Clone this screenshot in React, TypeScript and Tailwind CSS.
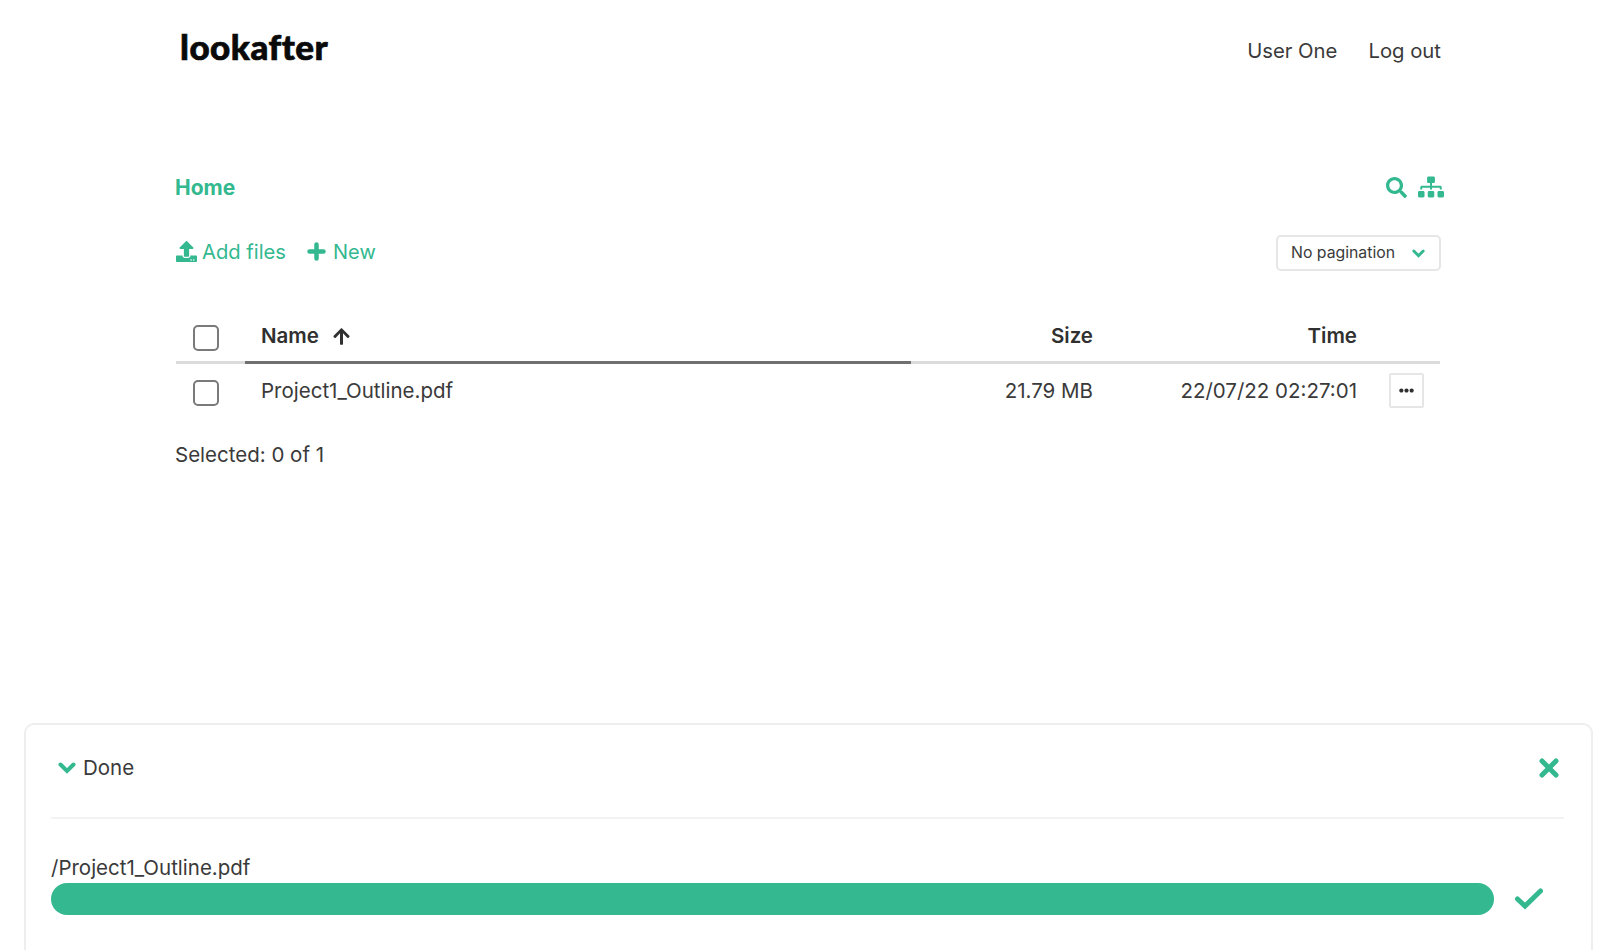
import React from "react";
import { FaSearch, FaSitemap, FaUpload, FaEllipsisH, FaArrowUp } from "react-icons/fa";

function Box() {
  return <span className="block w-[26px] h-[26px] rounded-[5px] border-2 border-[#7a7a7a] bg-white" />;
}

function Chevron({ className }: { className: string }) {
  return (
    <svg viewBox="0 0 18 12" className={className} fill="none" stroke="#33b890" strokeWidth="4" strokeLinecap="round" strokeLinejoin="miter">
      <polyline points="2.5,2.5 9,9 15.5,2.5" />
    </svg>
  );
}

export default function App() {
  return (
    <div className="h-[950px] overflow-hidden bg-white flex flex-col font-['Inter',sans-serif] text-[20.5px] text-[#3a3a3a]">
      <main className="h-[723px] shrink-0 pl-[176px] pr-[177px]">
        <header className="flex items-start justify-between h-[165px]">
          <div className="pl-[4px] pt-[22px] font-['Lato',sans-serif] font-black text-[35px] leading-[48px] text-[#0a0a0a] tracking-[0.5px] [-webkit-text-stroke:0.7px_#0a0a0a]">lookafter</div>
          <nav className="flex gap-[31px] pt-[36px] leading-[29px] text-[20.3px]">
            <span>User One</span>
            <span>Log out</span>
          </nav>
        </header>
        <div className="flex items-center justify-between h-[46px]">
          <span className="-ml-[1px] font-bold text-[21px] text-[#33b890] leading-[30px]">Home</span>
          <div className="flex items-center gap-[11px] text-[#33b890] -mr-[3px] -mt-[2px]">
            <FaSearch className="w-[21px] h-[21px]" />
            <FaSitemap className="w-[26px] h-[22px]" />
          </div>
        </div>
        <div className="flex items-center justify-between h-[36px] mt-[24px] mb-[43px]">
          <div className="flex items-center text-[#33b890] -mt-[2px]">
            <FaUpload className="w-[21px] h-[21px] mr-[5px]" />
            <span className="text-[20.2px]">Add files</span>
            <svg viewBox="0 0 19 19" className="w-[19px] h-[19px] ml-[21px] mr-[7px]" fill="none" stroke="#33b890" strokeWidth="4.5" strokeLinecap="round">
              <path d="M9.5 2.5V16.5M2.5 9.5H16.5" />
            </svg>
            <span className="text-[20px]">New</span>
          </div>
          <div className="w-[165px] h-[36px] rounded-[5px] border-2 border-[#e6e6e6] flex items-center justify-between pl-[13px] pr-[14px] text-[15.8px]">
            <span>No pagination</span>
            <Chevron className="w-[13px] h-[9px]" />
          </div>
        </div>
        <div className="flex items-stretch h-[50px] mr-[1px] border-b-[3px] border-[#dbdbdb] font-semibold text-[#303030]">
          <div className="w-[69px] shrink-0 pl-[17px] pt-[1px] flex items-center"><Box /></div>
          <div className="w-[666px] shrink-0 pl-[16px] pb-[3px] flex items-center gap-[13px] border-b-[3px] border-[#707070] -mb-[3px]">
            <span>Name</span>
            <FaArrowUp className="w-[19px] h-[19px]" />
          </div>
          <div className="w-[182px] shrink-0 text-right leading-[44px]">Size</div>
          <div className="w-[264px] shrink-0 text-right leading-[44px]">Time</div>
        </div>
        <div className="flex items-center h-[55px]">
          <div className="w-[69px] shrink-0 pl-[17px] pt-[2px] flex items-center"><Box /></div>
          <div className="w-[666px] shrink-0 pl-[16px]">Project1_Outline.pdf</div>
          <div className="w-[182px] shrink-0 text-right">21.79 MB</div>
          <div className="w-[264px] shrink-0 text-right">22/07/22 02:27:01</div>
          <div className="ml-[32px] -mt-[2px] w-[35px] h-[35px] rounded-[2px] border-2 border-[#e6e6e6] flex items-center justify-center text-[#303030]">
            <FaEllipsisH className="w-[15px] h-[15px]" />
          </div>
        </div>
        <div className="-ml-[1px] mt-[21px] leading-[30px]">Selected: 0 of 1</div>
      </main>
      <section className="ml-[24px] mr-[25px] h-[300px] shrink-0 rounded-[10px] border-2 border-[#eeeeee] pl-[25px] pr-[27px]">
        <div className="flex items-center justify-between h-[94px] pb-[6px] border-b-2 border-[#f3f3f3]">
          <div className="flex items-center gap-[7px] pl-[7px]">
            <Chevron className="w-[18px] h-[12px]" />
            <span>Done</span>
          </div>
          <svg viewBox="0 0 20 20" className="w-[20px] h-[20px] mr-[5px] -mt-[1px]" fill="none" stroke="#33b890" strokeWidth="5" strokeLinecap="round">
            <path d="M3 3L17 17M17 3L3 17" />
          </svg>
        </div>
        <div className="mt-[34px] leading-[30px]">/Project1_Outline.pdf</div>
        <div className="flex items-center">
          <div className="w-[1443px] h-[32px] shrink-0 rounded-full bg-[#33b890]" />
          <svg viewBox="0 0 28 22" className="w-[28px] h-[22px] ml-[21px] shrink-0" fill="none" stroke="#33b890" strokeWidth="5" strokeLinecap="round" strokeLinejoin="miter">
            <polyline points="2.5,11 10,18 25.5,3" />
          </svg>
        </div>
      </section>
    </div>
  );
}
